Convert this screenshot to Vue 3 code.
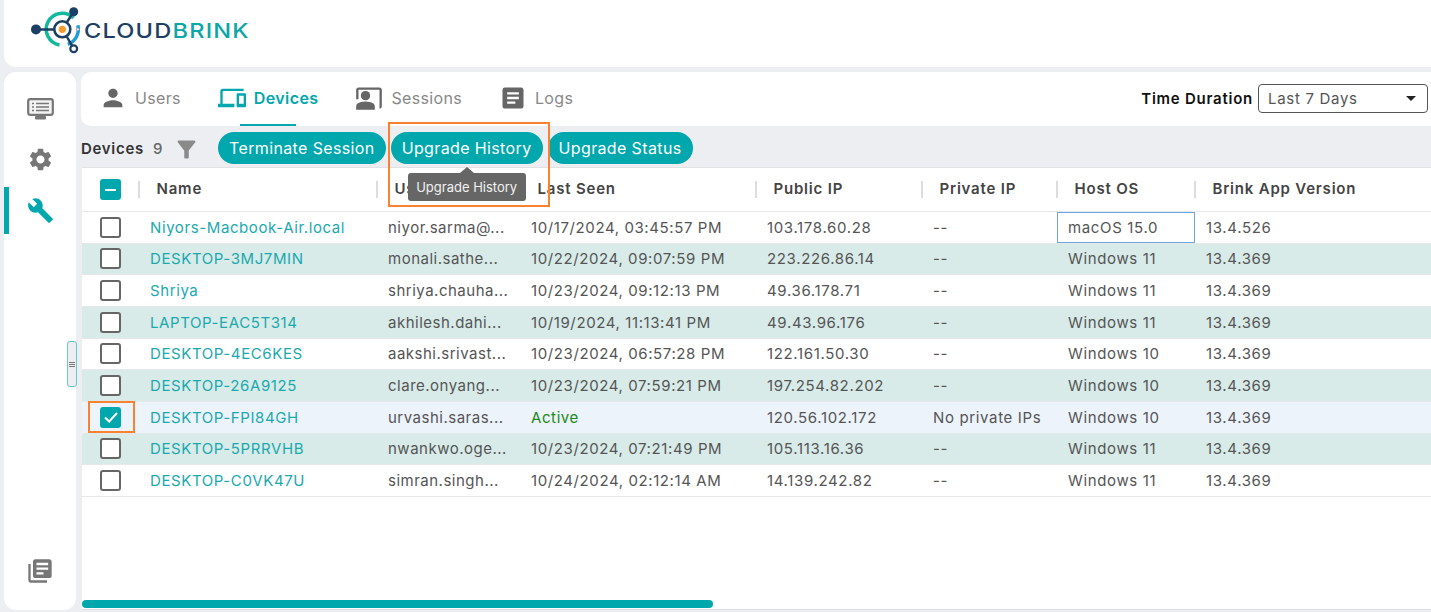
<script setup>
const devices = [
  { name: 'Niyors-Macbook-Air.local', user: 'niyor.sarma@...', seen: '10/17/2024, 03:45:57 PM', ip: '103.178.60.28', priv: '--', os: 'macOS 15.0', ver: '13.4.526', focus: true },
  { name: 'DESKTOP-3MJ7MIN', user: 'monali.sathe...', seen: '10/22/2024, 09:07:59 PM', ip: '223.226.86.14', priv: '--', os: 'Windows 11', ver: '13.4.369' },
  { name: 'Shriya', user: 'shriya.chauha...', seen: '10/23/2024, 09:12:13 PM', ip: '49.36.178.71', priv: '--', os: 'Windows 11', ver: '13.4.369' },
  { name: 'LAPTOP-EAC5T314', user: 'akhilesh.dahi...', seen: '10/19/2024, 11:13:41 PM', ip: '49.43.96.176', priv: '--', os: 'Windows 11', ver: '13.4.369' },
  { name: 'DESKTOP-4EC6KES', user: 'aakshi.srivast...', seen: '10/23/2024, 06:57:28 PM', ip: '122.161.50.30', priv: '--', os: 'Windows 10', ver: '13.4.369' },
  { name: 'DESKTOP-26A9125', user: 'clare.onyang...', seen: '10/23/2024, 07:59:21 PM', ip: '197.254.82.202', priv: '--', os: 'Windows 10', ver: '13.4.369' },
  { name: 'DESKTOP-FPI84GH', user: 'urvashi.saras...', seen: 'Active', ip: '120.56.102.172', priv: 'No private IPs', os: 'Windows 10', ver: '13.4.369', selected: true },
  { name: 'DESKTOP-5PRRVHB', user: 'nwankwo.oge...', seen: '10/23/2024, 07:21:49 PM', ip: '105.113.16.36', priv: '--', os: 'Windows 11', ver: '13.4.369' },
  { name: 'DESKTOP-C0VK47U', user: 'simran.singh...', seen: '10/24/2024, 02:12:14 AM', ip: '14.139.242.82', priv: '--', os: 'Windows 11', ver: '13.4.369' },
]
const columns = ['Name', 'Users', 'Last Seen', 'Public IP', 'Private IP', 'Host OS', 'Brink App Version']
</script>

<template>
  <div class="page">
    <header class="topbar">
      <div class="logo">
        <svg width="56" height="50" viewBox="0 0 56 50">
          <path d="M42.6 13A16 16 0 1 0 28.5 40" fill="none" stroke="#14b89c" stroke-width="3.5" />
          <path d="M46.8 20.2A16 16 0 0 1 36.8 39.3" fill="none" stroke="#1f9bd8" stroke-width="3.5" />
          <path d="M5 24.4H23M36 17L42.7 6.7M36 32L42.7 43.7" stroke="#1c3f66" stroke-width="2.5" />
          <circle cx="31.3" cy="24.3" r="8" fill="#fff" stroke="#1c3f66" stroke-width="2.6" />
          <circle cx="31.3" cy="24.3" r="3.6" fill="#f79a2b" />
          <circle cx="5" cy="24.4" r="5" fill="#1c3f66" />
          <circle cx="42.7" cy="6.7" r="4.5" fill="#1c3f66" />
          <circle cx="42.7" cy="43.7" r="3.4" fill="#fff" stroke="#1c3f66" stroke-width="2.2" />
          <circle cx="46.7" cy="24.4" r="1.4" fill="#fff" stroke="#8a9aaa" />
        </svg>
        <span class="word"><span class="cloud">CLOUD</span><span class="brink">BRINK</span></span>
      </div>
    </header>

    <div class="body">
      <aside class="sidebar">
        <div class="side-top">
          <div class="side-item">
            <svg width="27" height="22" viewBox="0 0 27 22">
              <rect x="1.2" y="1.2" width="24.6" height="15.6" rx="2" fill="#f3f3f3" stroke="#777" stroke-width="2.2" />
              <path d="M5 5.5h2M9 5.5h13M5 9h2M9 9h13M5 12.5h2M9 12.5h13" stroke="#777" stroke-width="1.6" />
              <rect x="8" y="18" width="11" height="3.5" rx="1" fill="#777" />
            </svg>
          </div>
          <div class="side-item">
            <svg width="27" height="27" viewBox="0 0 24 24"><path fill="#777" d="M19.14 12.94c.04-.3.06-.61.06-.94 0-.32-.02-.64-.07-.94l2.03-1.58c.18-.14.23-.41.12-.61l-1.92-3.32c-.12-.22-.37-.29-.59-.22l-2.39.96c-.5-.38-1.03-.7-1.62-.94l-.36-2.54c-.04-.24-.24-.41-.48-.41h-3.84c-.24 0-.43.17-.47.41l-.36 2.54c-.59.24-1.13.57-1.62.94l-2.39-.96c-.22-.08-.47 0-.59.22L2.74 8.87c-.12.21-.08.47.12.61l2.03 1.58c-.05.3-.09.63-.09.94s.02.64.07.94l-2.03 1.58c-.18.14-.23.41-.12.61l1.92 3.32c.12.22.37.29.59.22l2.39-.96c.5.38 1.03.7 1.62.94l.36 2.54c.05.24.24.41.48.41h3.84c.24 0 .44-.17.47-.41l.36-2.54c.59-.24 1.13-.56 1.62-.94l2.39.96c.22.08.47 0 .59-.22l1.92-3.32c.12-.22.07-.47-.12-.61l-2.01-1.58zM12 15.6c-1.98 0-3.6-1.62-3.6-3.6s1.62-3.6 3.6-3.6 3.6 1.62 3.6 3.6-1.62 3.6-3.6 3.6z" /></svg>
          </div>
          <div class="side-item active">
            <svg width="27" height="27" viewBox="0 0 24 24"><path fill="#00a7ad" d="M22.7 19l-9.1-9.1c.9-2.3.4-5-1.5-6.9-2-2-5-2.4-7.4-1.3L9 6 6 9 1.6 4.7C.4 7.1.9 10.1 2.9 12.1c1.9 1.9 4.6 2.4 6.9 1.5l9.1 9.1c.4.4 1 .4 1.4 0l2.3-2.3c.5-.4.5-1.1.1-1.4z" /></svg>
          </div>
        </div>
        <div class="side-item bottom">
          <svg width="28" height="28" viewBox="0 0 24 24"><path fill="#777" d="M4 6H2v14c0 1.1.9 2 2 2h14v-2H4V6zm16-4H8c-1.1 0-2 .9-2 2v12c0 1.1.9 2 2 2h12c1.1 0 2-.9 2-2V4c0-1.1-.9-2-2-2zm-1 9H9V9h10v2zm-4 4H9v-2h6v2zm4-8H9V5h10v2z" /></svg>
        </div>
        <div class="sash"><span></span><span></span><span></span></div>
      </aside>

      <main class="main">
        <div class="tabs-panel">
          <nav class="tabs">
            <a class="tab">
              <svg width="28" height="28" viewBox="0 0 24 24"><path fill="#666" d="M12 12c2.21 0 4-1.79 4-4s-1.79-4-4-4-4 1.79-4 4 1.79 4 4 4zm0 2c-2.67 0-8 1.34-8 4v2h16v-2c0-2.66-5.33-4-8-4z" /></svg>
              Users
            </a>
            <a class="tab current">
              <svg width="28" height="28" viewBox="0 0 24 24"><path fill="#00a7ad" d="M4 6h18V4H4c-1.1 0-2 .9-2 2v11H0v3h14v-3H4V6zm19 2h-6c-.55 0-1 .45-1 1v10c0 .55.45 1 1 1h6c.55 0 1-.45 1-1V9c0-.55-.45-1-1-1zm-1 9h-4v-7h4v7z" /></svg>
              Devices
            </a>
            <a class="tab">
              <svg width="28" height="28" viewBox="0 0 24 24"><g fill="#666"><path d="M21 3H3c-1.1 0-2 .9-2 2v8h2V5h18v16c1.1 0 2-.9 2-2V5c0-1.1-.9-2-2-2z" /><circle cx="9" cy="10" r="4" /><path d="M15.39 16.56C13.71 15.7 11.53 15 9 15s-4.71.7-6.39 1.56C1.61 17.07 1 18.1 1 19.22V22h16v-2.78c0-1.12-.61-2.15-1.61-2.66z" /></g></svg>
              Sessions
            </a>
            <a class="tab">
              <svg width="28" height="28" viewBox="0 0 24 24"><path fill="#666" d="M19 3H5c-1.1 0-2 .9-2 2v14c0 1.1.9 2 2 2h14c1.1 0 2-.9 2-2V5c0-1.1-.9-2-2-2zm-5 14H7v-2h7v2zm3-4H7v-2h10v2zm0-4H7V7h10v2z" /></svg>
              Logs
            </a>
          </nav>
          <div class="duration">
            <span class="duration-label">Time Duration</span>
            <div class="select">
              <span>Last 7 Days</span>
              <i class="caret"></i>
            </div>
          </div>
        </div>

        <div class="toolbar">
          <span class="tb-title">Devices</span>
          <span class="tb-count">9</span>
          <svg class="funnel" width="27" height="27" viewBox="0 0 24 24"><path fill="#8a8a8a" d="M4.25 5.61C6.27 8.2 10 13 10 13v6c0 .55.45 1 1 1h2c.55 0 1-.45 1-1v-6s3.72-4.8 5.74-7.39c.51-.66.04-1.61-.79-1.61H5.04c-.83 0-1.3.95-.79 1.61z" /></svg>
          <button class="pill">Terminate Session</button>
          <div class="pill-wrap">
            <button class="pill">Upgrade History</button>
            <div class="tooltip">Upgrade History</div>
            <div class="mark mark-btn"></div>
          </div>
          <button class="pill">Upgrade Status</button>
        </div>

        <div class="table">
          <div class="row head">
            <div class="cell check-cell">
              <span class="box on"><i class="dash"></i></span>
            </div>
            <div v-for="c in columns" :key="c" class="cell th">{{ c }}</div>
          </div>
          <div v-for="(d, i) in devices" :key="d.name" class="row" :class="{ alt: i % 2 === 1, sel: d.selected }">
            <div class="cell check-cell">
              <span v-if="d.selected" class="box on">
                <svg width="16" height="16" viewBox="0 0 16 16"><path d="M2 8.5L6.2 12.5L14 4" fill="none" stroke="#fff" stroke-width="2" /></svg>
              </span>
              <span v-else class="box"></span>
              <div v-if="d.selected" class="mark mark-check"></div>
            </div>
            <div class="cell name">{{ d.name }}</div>
            <div class="cell user">{{ d.user }}</div>
            <div class="cell date" :class="{ active: d.seen === 'Active' }">{{ d.seen }}</div>
            <div class="cell">{{ d.ip }}</div>
            <div class="cell">{{ d.priv }}</div>
            <div class="cell" :class="{ focus: d.focus }">{{ d.os }}</div>
            <div class="cell">{{ d.ver }}</div>
          </div>
          <div class="scroll-track"><div class="scroll-thumb"></div></div>
        </div>
      </main>
    </div>
  </div>
</template>

<style>
html, body { margin: 0; background: #eceef2; }
</style>

<style scoped>
.page {
  width: 1431px;
  height: 612px;
  overflow: hidden;
  background: #eceef2;
  font-family: Inter, "Liberation Sans", sans-serif;
  font-size: 15px;
  letter-spacing: 0.65px;
  color: #555;
  display: flex;
  flex-direction: column;
}
.topbar {
  height: 67px;
  margin-left: 4px;
  background: #fff;
  border-bottom-left-radius: 12px;
  flex-shrink: 0;
}
.logo {
  display: flex;
  align-items: center;
  padding: 5px 0 0 27px;
}
.word {
  display: inline-block;
  font-size: 20px;
  font-weight: 500;
  letter-spacing: 1px;
  margin-left: -3px;
  margin-top: 2px;
  transform: scaleX(1.18);
  transform-origin: left center;
}
.cloud { color: #1c3f66; }
.brink { color: #0aa6a8; }

.body {
  flex: 1;
  display: flex;
  margin-top: 5px;
  min-height: 0;
}
.sidebar {
  position: relative;
  width: 72px;
  margin: 0 5px 2px 4px;
  background: #fff;
  border-radius: 12px;
  display: flex;
  flex-direction: column;
  justify-content: space-between;
  align-items: center;
  flex-shrink: 0;
}
.side-top { margin-top: 11px; width: 100%; }
.side-item {
  height: 51px;
  display: flex;
  align-items: center;
  justify-content: center;
  position: relative;
}
.side-item.active::before {
  content: '';
  position: absolute;
  left: 0;
  top: 2px;
  bottom: 2px;
  width: 5px;
  background: #00a7ad;
}
.side-item.bottom { margin-bottom: 14px; }
.sash {
  position: absolute;
  left: 63px;
  top: 269px;
  width: 8px;
  height: 44px;
  background: #eceef2;
  border: 1px solid #6cc6cc;
  border-radius: 3px;
  display: flex;
  flex-direction: column;
  justify-content: center;
  gap: 1px;
  box-sizing: content-box;
}
.sash span { height: 1px; background: #777; margin: 0 1px; }

.main {
  flex: 1;
  min-width: 0;
  display: flex;
  flex-direction: column;
}
.tabs-panel {
  height: 54px;
  background: #fff;
  border-top-left-radius: 10px;
  border-bottom-left-radius: 10px;
  display: flex;
  justify-content: space-between;
  align-items: center;
  flex-shrink: 0;
}
.tabs {
  display: flex;
  align-self: stretch;
  padding-left: 18px;
  gap: 22px;
}
.tab {
  display: flex;
  align-items: center;
  gap: 8px;
  padding: 0 15px 2px 0;
  color: #888;
  font-size: 16px;
  letter-spacing: 0.33px;
  position: relative;
}
.tab.current { color: #00a7ad; font-weight: 600; letter-spacing: 0.4px; }
.tab.current::after {
  content: '';
  position: absolute;
  left: 22px;
  width: 56px;
  bottom: 0;
  height: 2px;
  background: #00a7ad;
}
.duration {
  display: flex;
  align-items: center;
  gap: 5px;
  padding-right: 3px;
  margin-top: -2px;
}
.duration-label { font-weight: 600; color: #111; font-size: 15px; letter-spacing: 0.75px; }
.select {
  width: 170px;
  height: 29px;
  border: 1px solid #555;
  border-radius: 4px;
  box-sizing: border-box;
  display: flex;
  align-items: center;
  justify-content: space-between;
  padding: 0 11px 0 9px;
  font-size: 15px;
  letter-spacing: 0.7px;
  color: #555;
}
.caret {
  border: 5px solid transparent;
  border-top: 5px solid #222;
  border-bottom: 0;
}

.toolbar {
  height: 41px;
  display: flex;
  align-items: center;
  flex-shrink: 0;
  padding-top: 3px;
  box-sizing: border-box;
}
.tb-title { font-weight: 600; color: #333; font-size: 15px; letter-spacing: 0.7px; }
.tb-count { margin-left: 9px; font-weight: 500; color: #666; }
.funnel { margin: 2px 0 0 10px; }
.pill {
  height: 32px;
  padding: 0 11px;
  border: 0;
  border-radius: 16px;
  background: #00a7ad;
  color: #fff;
  font: inherit;
  font-size: 16px;
  letter-spacing: 0.37px;
  white-space: nowrap;
  margin-left: 5px;
}
.funnel + .pill { margin-left: 18px; }
.pill-wrap { position: relative; display: flex; }
.mark {
  position: absolute;
  border: 2px solid #f9812f;
  box-sizing: border-box;
  pointer-events: none;
  z-index: 3;
}
.mark-btn { left: 2px; top: -10px; width: 162px; height: 85px; }
.mark-check { left: 6px; top: -1px; width: 47px; height: 32px; }
.tooltip {
  position: absolute;
  left: 22px;
  top: 41px;
  width: 118px;
  height: 28px;
  line-height: 28px;
  text-align: center;
  background: #666;
  color: #f2f2f2;
  font-size: 13px;
  letter-spacing: 0;
  border-radius: 3px;
  z-index: 2;
}
.tooltip::before {
  content: '';
  position: absolute;
  left: 52px;
  top: -6px;
  border: 7px solid transparent;
  border-top: 0;
  border-bottom: 6px solid #666;
}

.table {
  position: relative;
  flex: 1;
  min-height: 0;
  margin: 0 0 2px 1px;
  background: #fff;
  border-top: 1px solid #e2e2e2;
  border-bottom: 1px solid #dcdde2;
}
.row {
  display: grid;
  grid-template-columns: 57px 238px 143px 236px 166px 135px 138px 1fr;
  height: 31.67px;
  border-bottom: 1px solid #e6e8ea;
  box-sizing: border-box;
  position: relative;
}
.row.head { height: 44px; }
.row.alt { background: #d8ebe9; }
.row.sel { background: #edf3fb; }
.cell {
  display: flex;
  align-items: center;
  padding-left: 11px;
  box-sizing: border-box;
  white-space: nowrap;
  overflow: hidden;
  position: relative;
}
.user { letter-spacing: 0.5px; }
.date { letter-spacing: 0.6px; }
.check-cell { padding-left: 18px; overflow: visible; }
.th {
  padding: 0 0 2px 17.5px;
  font-weight: 600;
  color: #444;
  font-size: 15px;
  letter-spacing: 0.8px;
  overflow: visible;
}
.th::before {
  content: '';
  position: absolute;
  left: -1px;
  top: 13px;
  height: 17px;
  width: 2px;
  background: #ddd;
}
.name { color: #1aa9ae; letter-spacing: 0.6px; }
.active { color: #1a8a1a; }
.focus { box-shadow: inset 0 0 0 1px #6ea5e0; }
.box {
  width: 21px;
  height: 21px;
  box-sizing: border-box;
  border: 2px solid #666;
  border-radius: 3px;
  background: #fff;
  display: flex;
  align-items: center;
  justify-content: center;
}
.box.on { background: #00a7ad; border-color: #00a7ad; }
.dash { width: 11px; height: 2px; background: #fff; }
.scroll-track {
  position: absolute;
  left: 0;
  right: 0;
  bottom: 0;
  height: 9px;
  background: #fff;
}
.scroll-thumb {
  width: 631px;
  height: 8px;
  border-radius: 4px;
  background: #00a7ad;
}
</style>
